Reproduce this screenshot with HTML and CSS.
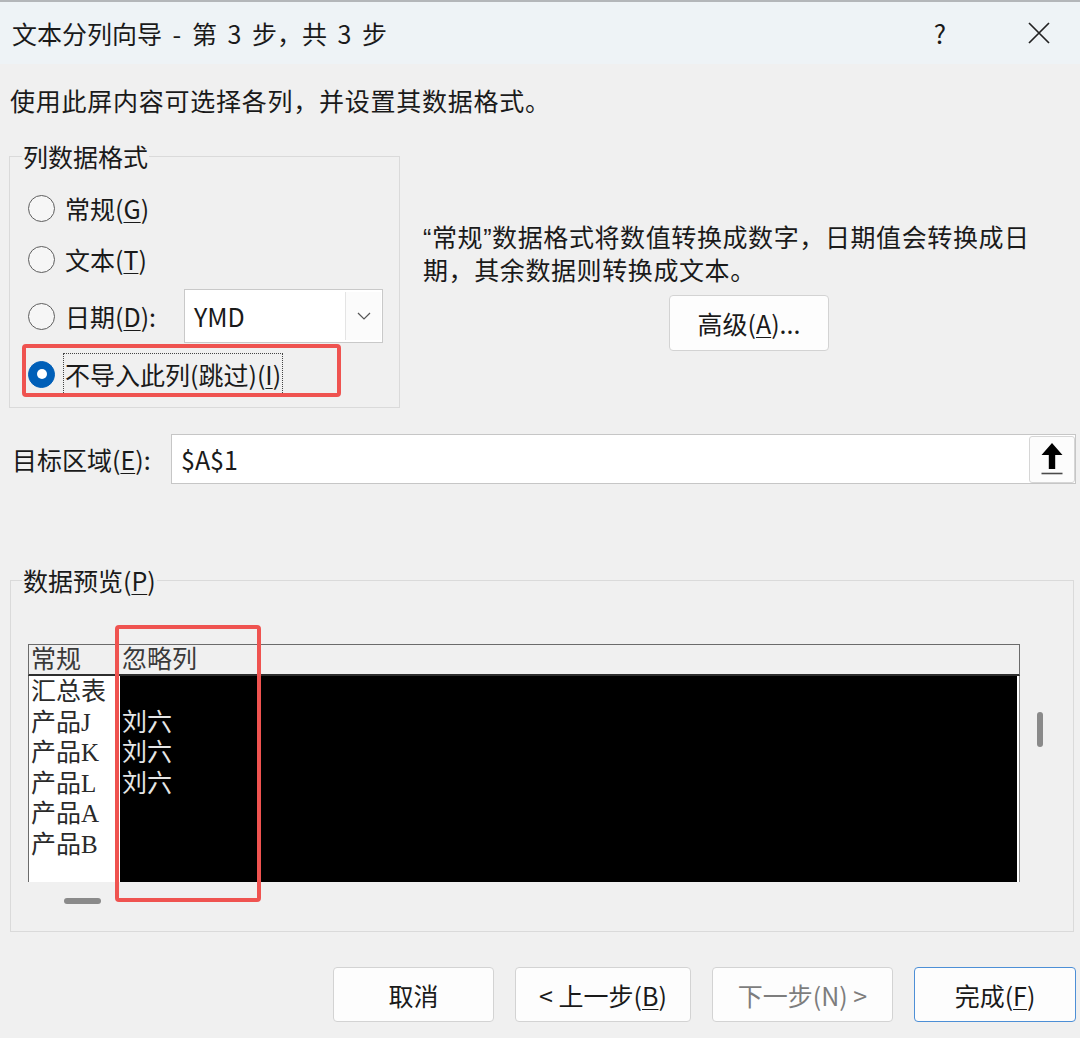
FILE: index.html
```html
<!DOCTYPE html>
<html lang="zh-CN">
<head>
<meta charset="utf-8">
<title>文本分列向导</title>
<link rel="stylesheet" href="styles.css">
</head>
<body>
<div class="dialog">
  <div class="titlebar">
    <span class="title">文本分列向导 - 第 3 步，共 3 步</span>
    <span class="help">?</span>
    <span class="close">
      <svg width="24" height="24" viewBox="0 0 24 24"><path d="M2 2 L22 22 M22 2 L2 22" stroke="#222" stroke-width="1.7" fill="none"/></svg>
    </span>
  </div>

  <div class="intro">使用此屏内容可选择各列，并设置其数据格式。</div>

  <div class="format-row">
    <fieldset class="group format-group">
      <legend>列数据格式</legend>
      <div class="radio-row r1"><span class="radio"></span><span class="label">常规(<u>G</u>)</span></div>
      <div class="radio-row r2"><span class="radio"></span><span class="label">文本(<u>T</u>)</span></div>
      <div class="radio-row r3">
        <span class="radio"></span><span class="label date-label">日期(<u>D</u>):</span>
        <div class="combo">
          <span class="combo-val">YMD</span>
          <span class="combo-btn"><svg width="14" height="8" viewBox="0 0 14 8"><path d="M1 1 L7 7 L13 1" stroke="#555" stroke-width="1.2" fill="none"/></svg></span>
        </div>
      </div>
      <div class="radio-row r4">
        <span class="radio on"></span><span class="label focus">不导入此列(跳过)(<u>I</u>)</span>
        <span class="mark mark1"></span>
      </div>
    </fieldset>
    <div class="desc">
      <p><span class="q">“</span>常规<span class="q">”</span>数据格式将数值转换成数字，日期值会转换成日<br>期，其余数据则转换成文本。</p>
      <button class="btn adv">高级(<u>A</u>)...</button>
    </div>
  </div>

  <div class="target">
    <span class="target-label">目标区域(<u>E</u>):</span>
    <div class="target-input">
      <span class="target-val">$A$1</span>
      <span class="ref-btn">
        <svg width="24" height="34" viewBox="0 0 24 34"><path d="M12 1 L22.5 13 L15.2 13 L15.2 27 L8.8 27 L8.8 13 L1.5 13 Z" fill="#000"/><path d="M1.5 31.5 H22.5" stroke="#4a4a4a" stroke-width="1.6"/></svg>
      </span>
    </div>
  </div>

  <fieldset class="group preview-group">
    <legend>数据预览(<u>P</u>)</legend>
    <div class="preview-area">
      <div class="table">
        <div class="thead"><span class="th1">常规</span><span class="th2">忽略列</span></div>
        <div class="tbody">
          <div class="col1">
            <div class="cell">汇总表</div>
            <div class="cell">产品J</div>
            <div class="cell">产品K</div>
            <div class="cell">产品L</div>
            <div class="cell">产品A</div>
            <div class="cell">产品B</div>
          </div>
          <div class="col2">
            <div class="cell">&nbsp;</div>
            <div class="cell">刘六</div>
            <div class="cell">刘六</div>
            <div class="cell">刘六</div>
          </div>
        </div>
      </div>
      <div class="vthumb"></div>
      <span class="mark mark2"></span>
    </div>
    <div class="hthumb"></div>
  </fieldset>

  <div class="actions">
    <button class="btn b-cancel">取消</button>
    <button class="btn b-back">&lt; 上一步(<u>B</u>)</button>
    <button class="btn b-next">下一步(N) &gt;</button>
    <button class="btn b-finish">完成(<u>F</u>)</button>
  </div>
</div>
</body>
</html>
```

FILE: styles.css
```css
* { box-sizing: border-box; }

body {
  margin: 0;
  background: #f0f0f0;
  font-family: "Noto Sans CJK SC", "Noto Sans", sans-serif;
  color: #1a1a1a;
}

u {
  text-decoration-thickness: 1px;
  text-underline-offset: 3px;
}

.dialog {
  width: 1080px;
  height: 1038px;
  overflow: hidden;
  background: #f0f0f0;
}

/* title bar */
.titlebar {
  height: 64px;
  display: flex;
  align-items: center;
  background: #eef3f6;
  border-top: 2px solid #b3b6b9;
  padding-right: 18px;
}
.title {
  flex: 1;
  padding-left: 12px;
  font-size: 25px;
  line-height: 30px;
  word-spacing: 5px;
}
.help {
  width: 40px;
  text-align: center;
  font-size: 26px;
  line-height: 30px;
}
.close {
  width: 46px;
  margin-left: 56px;
  display: flex;
  justify-content: center;
}

.intro {
  margin-top: 19px;
  padding-left: 10px;
  font-size: 25px;
  line-height: 34px;
  letter-spacing: 0.75px;
}

/* group boxes */
.group {
  margin: 0;
  min-width: 0;
  border: 1px solid #dadada;
}
.group legend {
  font-size: 25px;
  line-height: 28px;
  padding: 0 1px;
}

.format-row {
  display: flex;
  margin-top: 25px;
}
.format-group {
  margin-left: 9px;
  width: 391px;
  padding: 12px 0 6px 12px;
}

.radio-row {
  position: relative;
  display: flex;
  align-items: center;
  padding-left: 6px;
}
.r1 { height: 52px; }
.r2 { height: 50px; }
.r3 { height: 54px; margin-top: 5px; }
.r4 { height: 54px; margin-top: 4px; }

.radio {
  flex: none;
  width: 27px;
  height: 27px;
  border: 1.5px solid #5e5e5e;
  border-radius: 50%;
  background: #f6f6f6;
}
.radio.on {
  background: #005fb8;
  border-color: #005fb8;
  display: flex;
  align-items: center;
  justify-content: center;
}
.radio.on::after {
  content: "";
  width: 10px;
  height: 10px;
  border-radius: 50%;
  background: #fff;
}
.label {
  margin-left: 10px;
  font-size: 25px;
  line-height: 30px;
  white-space: nowrap;
}
.date-label { width: 119px; }
.focus {
  margin-left: 8px;
  padding: 0 1px;
  line-height: 40px;
  border: 1px dotted #444;
}

.combo {
  width: 199px;
  height: 54px;
  border: 1px solid #c9c9c9;
  background: #fff;
  display: flex;
  align-items: center;
}
.combo-val {
  flex: 1;
  padding-left: 9px;
  font-size: 25px;
}
.combo-btn {
  width: 36px;
  height: 48px;
  margin-right: 1px;
  border-left: 1px solid #e4e4e4;
  background: #fbfbfb;
  display: flex;
  align-items: center;
  justify-content: center;
}

.mark {
  position: absolute;
  border: 4px solid #ef5350;
  border-radius: 4px;
}
.mark1 {
  left: 0;
  top: -3px;
  width: 319px;
  height: 53px;
}

.desc {
  margin-left: 23px;
  margin-top: 79px;
}
.desc p {
  margin: 0;
  font-size: 25px;
  line-height: 31px;
  white-space: nowrap;
  letter-spacing: 0.6px;
}
.desc .q {
  font-family: "Liberation Sans", sans-serif;
}

.btn {
  font: inherit;
  font-size: 25px;
  color: #1a1a1a;
  background: #fdfdfd;
  border: 1px solid #d3d3d3;
  border-radius: 4px;
  padding: 0;
}
.adv {
  display: block;
  width: 160px;
  height: 56px;
  margin: 10px 0 0 246px;
}

/* target */
.target {
  display: flex;
  align-items: center;
  height: 50px;
  margin-top: 26px;
  padding-left: 12px;
}
.target-label {
  width: 159px;
  font-size: 25px;
  white-space: nowrap;
}
.target-input {
  flex: 1;
  height: 50px;
  margin-right: 4px;
  border: 1px solid #c6c6c6;
  background: #fff;
  display: flex;
  align-items: center;
}
.target-val {
  flex: 1;
  padding-left: 9px;
  font-size: 25px;
}
.ref-btn {
  width: 46px;
  height: 47px;
  border: 1px solid #d6d6d6;
  border-radius: 3px;
  background: #fcfcfc;
  display: flex;
  align-items: center;
  justify-content: center;
}

/* preview */
.preview-group {
  margin: 82px 0 0 10px;
  width: 1064px;
  padding: 50px 0 27px 11px;
}
.preview-area {
  position: relative;
  display: flex;
  margin-left: 6px;
}
.table {
  width: 992px;
  font-family: "Liberation Serif", "Noto Sans CJK SC", serif;
  font-size: 25px;
}
.thead {
  height: 32px;
  display: flex;
  background: #f0f0f0;
  border: 1px solid #6b6b6b;
  border-bottom: 2px solid #2e2e2e;
  color: #3a3a3a;
  line-height: 29px;
}
.th1 { width: 91px; padding-left: 2px; }
.th2 { padding-left: 2px; }
.tbody {
  height: 206px;
  display: flex;
  background: #fff;
  border-left: 1px solid #6b6b6b;
  border-right: 1px solid #8c8c8c;
  padding-right: 2px;
}
.col1 {
  width: 91px;
  padding: 1px 0 0 2px;
  color: #2a2a2a;
}
.col2 {
  width: 897px;
  padding: 1px 0 0 2px;
  background: #000;
  color: #e6e6e6;
}
.cell {
  height: 30.5px;
  line-height: 30.5px;
  white-space: nowrap;
}
.vthumb {
  width: 6px;
  height: 35px;
  margin: 68px 0 0 17px;
  border-radius: 3px;
  background: #8a8a8a;
}
.hthumb {
  width: 37px;
  height: 6px;
  margin: 16px 0 0 42px;
  border-radius: 3px;
  background: #8a8a8a;
}
.mark2 {
  left: 87px;
  top: -19px;
  width: 146px;
  height: 277px;
}

/* footer buttons */
.actions {
  display: flex;
  justify-content: flex-end;
  gap: 21px;
  margin-top: 35px;
  padding-right: 4px;
}
.actions .btn { height: 55px; }
.b-cancel { width: 161px; }
.b-back { width: 176px; }
.b-next { width: 181px; color: #7d7d7d; }
.b-finish { width: 162px; border: 1.5px solid #4d8fd6; }
```
